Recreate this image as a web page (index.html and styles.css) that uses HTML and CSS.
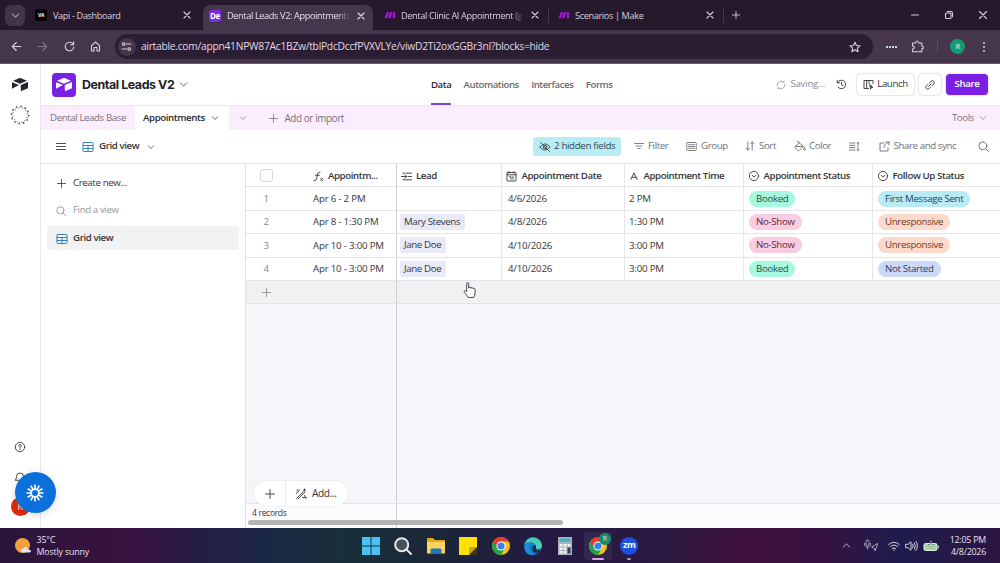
FILE: index.html
```html
<!DOCTYPE html>
<html lang="en">
<head>
    <meta charset="UTF-8">
    <meta name="viewport" content="width=device-width, initial-scale=1.0">
    <title>Dental Leads V2: Appointments</title>
    <link rel="stylesheet" href="styles.css">
</head>
<body>
    <!-- Shared icons -->
    <svg class="sprite" aria-hidden="true">
        <symbol id="chevron" viewBox="0 0 10 10"><path d="M1.500 3.300 5 6.800l3.500-3.500"/></symbol>
        <symbol id="close" viewBox="0 0 10 10"><path d="m2 2 6 6M8 2 2 8"/></symbol>
        <symbol id="plus" viewBox="0 0 10 10"><path d="M5 .5v9M.5 5h9"/></symbol>
        <symbol id="search" viewBox="0 0 10 10"><circle cx="4.400" cy="4.400" r="3.600"/><path d="m7 7 2.400 2.400"/></symbol>
        <symbol id="make" viewBox="0 0 12 10"><path d="M1.600 8.200 4.200 2.200M5.200 8.200l2-6M10 8.200v-6" fill="none" stroke="#a512dc" stroke-width="2.400"/></symbol>
        <symbol id="table" viewBox="0 0 12 12"><rect x="1" y="1.500" width="10" height="9" rx=".8"/><path d="M1 4.500h10M1 7.500h10M6 4.500v6"/></symbol>
        <symbol id="select" viewBox="0 0 12 12"><circle cx="6" cy="6" r="4.600"/><path d="m4.200 5.300 1.800 1.800 1.800-1.800"/></symbol>
        <symbol id="airtable" viewBox="0 0 18 15"><path d="M2 3.800 8.200 1.200q.8-.3 1.600 0L16 3.800 9 6.700z"/><path d="M9.800 7.900 17 5v6.200l-7.200 3z"/><path d="M1 5.200 8 8.100 2.800 10.700 1 11.800z"/></symbol>
        <symbol id="chrome" viewBox="0 0 20 20"><circle cx="10" cy="10" r="9" fill="#fbc116"/><path d="M10 10 2.200 5.500A9 9 0 0 0 10 19l4-6.800z" fill="#24a148"/><path d="M10 5.500h7.800A9 9 0 0 0 2.200 5.500L6 12z" fill="#e33b2e"/><circle cx="10" cy="10" r="4.600" fill="#fff"/><circle cx="10" cy="10" r="3.600" fill="#3b7de9"/></symbol>
    </svg>

    <!-- Browser tabs -->
    <div class="tab-strip">
        <div class="tab-search"><svg class="icon s9"><use href="#chevron"/></svg></div>
        <div class="tab tab-first">
            <span class="fav fav-vapi">VA</span>
            <span class="tab-title">Vapi - Dashboard</span>
            <svg class="icon s10"><use href="#close"/></svg>
        </div>
        <div class="tab tab-active">
            <span class="fav fav-base">De</span>
            <span class="tab-title tab-fade">Dental Leads V2: Appointments</span>
            <svg class="icon s10"><use href="#close"/></svg>
        </div>
        <div class="tab tab-line">
            <svg class="fav-make"><use href="#make"/></svg>
            <span class="tab-title tab-fade">Dental Clinic AI Appointment (g</span>
            <svg class="icon s10"><use href="#close"/></svg>
        </div>
        <div class="tab tab-line">
            <svg class="fav-make"><use href="#make"/></svg>
            <span class="tab-title">Scenarios | Make</span>
            <svg class="icon s10"><use href="#close"/></svg>
        </div>
        <svg class="icon s8 new-tab"><use href="#plus"/></svg>
        <div class="window-buttons">
            <svg class="icon s10" viewBox="0 0 10 10"><path d="M1.500 5h7"/></svg>
            <svg class="icon s10" viewBox="0 0 10 10"><rect x="1.500" y="3" width="5.500" height="5.500" rx="1"/><path d="M3.300 1.500h3.500q1.700 0 1.700 1.700v3.500"/></svg>
            <svg class="icon s10" viewBox="0 0 10 10"><path d="m1.500 1.500 7 7M8.500 1.500l-7 7"/></svg>
        </div>
    </div>

    <!-- Address bar -->
    <div class="address-bar">
        <div class="nav-buttons">
            <svg class="icon s11" viewBox="0 0 11 11"><path d="M10 5.500H1.500M5.300 1.500l-4 4 4 4"/></svg>
            <svg class="icon s11 dim" viewBox="0 0 11 11"><path d="M1 5.500h8.500M5.700 1.500l4 4-4 4"/></svg>
            <svg class="icon s11" viewBox="0 0 11 11"><path d="M9.300 3.500A4.300 4.300 0 1 0 9.800 6M9.600.8v3H6.600"/></svg>
            <svg class="icon s11" viewBox="0 0 11 11"><path d="M1.500 4.600 5.500 1l4 3.600V10H7V6.500H4V10H1.500z"/></svg>
        </div>
        <div class="url-field">
            <span class="site-info"><svg class="icon s11" viewBox="0 0 11 11"><circle cx="2.800" cy="3" r="1.300"/><path d="M5.500 3H10M1 8h4.500"/><circle cx="8.200" cy="8" r="1.300"/></svg></span>
            <span class="url">airtable.com/appn41NPW87Ac1BZw/tblPdcDccfPVXVLYe/viwD2Ti2oxGGBr3nI?blocks=hide</span>
            <svg class="icon s12" viewBox="0 0 12 12"><path d="m6 1.200 1.400 3.300 3.600.3-2.700 2.400.8 3.500L6 8.800l-3.100 1.900.8-3.500L1 4.800l3.600-.3z"/></svg>
        </div>
        <div class="browser-tools">
            <span class="ext-dots"><i></i><i></i><i></i><i></i></span>
            <svg class="icon s13" viewBox="0 0 13 13"><path d="M1.500 3h3.300q0-2 1.400-2t1.400 2h3.200v3q1.700.2 1.700 1.500t-1.700 1.400v2.900H1.500V9q1.800-.2 1.800-1.600T1.500 5.900z"/></svg>
            <span class="bar-line"></span>
            <span class="profile">R</span>
            <svg class="kebab" viewBox="0 0 4 12"><circle cx="2" cy="2" r="1"/><circle cx="2" cy="6" r="1"/><circle cx="2" cy="10" r="1"/></svg>
        </div>
    </div>

    <!-- Airtable -->
    <div class="app">
        <div class="rail">
            <svg class="rail-logo"><use href="#airtable"/></svg>
            <svg class="rail-loader" viewBox="0 0 20 20"><circle cx="10" cy="10" r="8.600"/><circle class="inner" cx="10" cy="10" r="7.300"/></svg>
            <svg class="icon s12 rail-help" viewBox="0 0 12 12"><circle cx="6" cy="6" r="4.700"/><path d="M4.600 5q.1-1.500 1.400-1.500T7.400 4.800Q7.400 5.600 6 6.300v.7M6 8v.8"/></svg>
            <svg class="icon s12 rail-bell" viewBox="0 0 12 12"><path d="M1.500 9q1-1 1-3.500a3.500 3.500 0 0 1 7 0Q9.500 8 10.500 9z"/></svg>
            <span class="rail-user">R</span>
        </div>
        <div class="workspace">
            <div class="base-header">
                <div class="base-name">
                    <span class="base-icon"><svg><use href="#airtable"/></svg></span>
                    <h1>Dental Leads V2</h1>
                    <svg class="icon s9"><use href="#chevron"/></svg>
                </div>
                <nav class="base-nav">
                    <a class="active">Data</a>
                    <a>Automations</a>
                    <a>Interfaces</a>
                    <a>Forms</a>
                </nav>
                <div class="base-actions">
                    <svg class="icon s10 saving-icon" viewBox="0 0 10 10"><path d="M1.200 5.500A3.800 3.800 0 0 1 8 2.700V1M8.800 4.500A3.800 3.800 0 0 1 2 7.300V9"/></svg>
                    <span class="saving">Saving...</span>
                    <svg class="icon s11 history" viewBox="0 0 11 11"><path d="M1.400 3.700A4.300 4.300 0 1 1 2 8.200M1.200 1.300v2.500h2.500M5.500 3.200v2.600l1.800 1"/></svg>
                    <span class="btn launch"><svg class="icon s11" viewBox="0 0 11 11"><path d="M5.500 9.500H1v-8h9v3M3.700 1.500v8M6 1.500v3"/><path d="m7 5.800 2.800 2.500-1.400.2-.6 1.300z" fill="currentColor"/></svg>Launch</span>
                    <span class="btn link"><svg class="icon s10" viewBox="0 0 10 10"><path d="M3.700 6.300 6.300 3.700M4.400 2.900l1.500-1.500a1.900 1.900 0 0 1 2.700 2.700L7.100 5.600M5.600 7.100 4.100 8.600a1.900 1.900 0 0 1-2.700-2.700l1.500-1.500"/></svg></span>
                    <span class="btn share">Share</span>
                </div>
            </div>

            <div class="table-tabs">
                <span class="table-tab first">Dental Leads Base</span>
                <span class="table-tab current">Appointments <svg class="icon s8"><use href="#chevron"/></svg></span>
                <span class="table-more"><svg class="icon s8"><use href="#chevron"/></svg></span>
                <span class="table-add"><svg class="icon s9"><use href="#plus"/></svg>Add or import</span>
                <span class="table-tools">Tools <svg class="icon s8"><use href="#chevron"/></svg></span>
            </div>

            <div class="view-bar">
                <svg class="icon s10 burger" viewBox="0 0 10 10"><path d="M.5 1.500h9M.5 4.500h9M.5 7.500h9"/></svg>
                <svg class="icon s12 blue"><use href="#table"/></svg>
                <span class="view-name">Grid view</span>
                <svg class="icon s8"><use href="#chevron"/></svg>
                <div class="view-tools">
                    <span class="hidden-fields"><svg class="icon s12" viewBox="0 0 12 12"><path d="M1 6q5-6.500 10 0-5 6.500-10 0zM1.500 1.500l9 9"/><circle cx="6" cy="6" r="1.700"/></svg>2 hidden fields</span>
                    <span class="tool filter"><svg class="icon s10" viewBox="0 0 10 10"><path d="M.5 2.500h9M2.200 5h5.600M4 7.500h2"/></svg>Filter</span>
                    <span class="tool group"><svg class="icon s11" viewBox="0 0 11 11"><rect x=".8" y="1.500" width="9.400" height="8" rx=".6"/><path d="M2.500 3.700h1M4.500 3.700h4M2.500 5.500h1M4.500 5.500h4M2.500 7.300h1M4.500 7.300h4"/></svg>Group</span>
                    <span class="tool sort"><svg class="icon s10" viewBox="0 0 10 10"><path d="M2.800 1v8M1 7.200 2.800 9l1.800-1.800M7.200 9V1M5.400 2.800 7.200 1 9 2.800"/></svg>Sort</span>
                    <span class="tool color"><svg class="icon s12" viewBox="0 0 12 12"><path d="m3 1 6.300 5.300-4.200 4.200q-.6.500-1.200 0L1.200 7.800q-.5-.6 0-1.200l4-3.700M1.500 6.500h7.700"/><path d="M10.500 7.500q-1.700 3 0 3t0-3"/></svg>Color</span>
                    <span class="tool height"><svg class="icon s11" viewBox="0 0 11 11"><path d="M.5 2H6M.5 4.300H6M.5 6.600H6M.5 9H6M9 1.500v8M8 2.300l1-.8 1 .8M8 8.700l1 .8 1-.8"/></svg></span>
                    <span class="tool sync"><svg class="icon s11" viewBox="0 0 11 11"><path d="M5 2H1v8h8V6.500M7 1h3v3M10 1Q5 2.500 5 6.500"/></svg>Share and sync</span>
                    <svg class="icon s11 find"><use href="#search"/></svg>
                </div>
            </div>

            <div class="content">
                <aside class="views">
                    <div class="view-row create"><svg class="icon s9"><use href="#plus"/></svg>Create new...</div>
                    <div class="view-row find-view"><svg class="icon s10"><use href="#search"/></svg>Find a view</div>
                    <div class="view-row selected"><svg class="icon s12 blue"><use href="#table"/></svg>Grid view</div>
                </aside>

                <main class="grid">
                    <div class="row head">
                        <div class="cell num"><span class="check"></span></div>
                        <div class="cell name"><svg class="icon s11" viewBox="0 0 11 11"><path d="M7 1.200Q5 .5 4.600 3L3.600 8Q3.200 10 1 9.500M2.400 4.200h4M7.800 7.500l1.700 2M9.500 7.500l-1.700 2"/></svg>Appointm...</div>
                        <div class="cell lead"><svg class="icon s11" viewBox="0 0 11 11"><path d="M5 2.200h5.500M.5 5.500h5M4 4l1.700 1.500L4 7M7 5.500h3.500M2 2.200h1.500M2 8.800h8.500"/></svg>Lead</div>
                        <div class="cell date"><svg class="icon s11" viewBox="0 0 11 11"><rect x="1" y="1.500" width="9" height="8.500" rx=".5"/><path d="M1 3.800h9M3 .5v1.500M8 .5v1.500M3.500 5.700H5v2.500M7 5.500v2.700"/></svg>Appointment Date</div>
                        <div class="cell time"><svg class="icon s10" viewBox="0 0 10 10"><path d="M1.800 8.500 5 1.800l3.200 6.700M3 6.300h4"/></svg>Appointment Time</div>
                        <div class="cell status"><svg class="icon s12"><use href="#select"/></svg>Appointment Status</div>
                        <div class="cell follow"><svg class="icon s12"><use href="#select"/></svg>Follow Up Status</div>
                    </div>
                    <div class="row">
                        <div class="cell num">1</div>
                        <div class="cell name">Apr 6 - 2 PM</div>
                        <div class="cell lead"></div>
                        <div class="cell date">4/6/2026</div>
                        <div class="cell time">2 PM</div>
                        <div class="cell status"><span class="pill booked">Booked</span></div>
                        <div class="cell follow"><span class="pill sent">First Message Sent</span></div>
                    </div>
                    <div class="row">
                        <div class="cell num">2</div>
                        <div class="cell name">Apr 8 - 1:30 PM</div>
                        <div class="cell lead"><span class="linked">Mary Stevens</span></div>
                        <div class="cell date">4/8/2026</div>
                        <div class="cell time">1:30 PM</div>
                        <div class="cell status"><span class="pill no-show">No-Show</span></div>
                        <div class="cell follow"><span class="pill unresponsive">Unresponsive</span></div>
                    </div>
                    <div class="row">
                        <div class="cell num">3</div>
                        <div class="cell name">Apr 10 - 3:00 PM</div>
                        <div class="cell lead"><span class="linked">Jane Doe</span></div>
                        <div class="cell date">4/10/2026</div>
                        <div class="cell time">3:00 PM</div>
                        <div class="cell status"><span class="pill no-show">No-Show</span></div>
                        <div class="cell follow"><span class="pill unresponsive">Unresponsive</span></div>
                    </div>
                    <div class="row">
                        <div class="cell num">4</div>
                        <div class="cell name">Apr 10 - 3:00 PM</div>
                        <div class="cell lead"><span class="linked">Jane Doe</span></div>
                        <div class="cell date">4/10/2026</div>
                        <div class="cell time">3:00 PM</div>
                        <div class="cell status"><span class="pill booked">Booked</span></div>
                        <div class="cell follow"><span class="pill not-started">Not Started</span></div>
                    </div>
                    <div class="row add-row">
                        <div class="cell num"><svg class="icon s9"><use href="#plus"/></svg></div>
                        <div class="cell name"></div>
                    </div>
                    <div class="grid-space"><div class="frozen"></div></div>
                    <div class="grid-footer">
                        <div class="frozen">4 records</div>
                        <div class="scrollbar"></div>
                    </div>
                    <div class="add-pill">
                        <span class="add-plus"><svg class="icon s10"><use href="#plus"/></svg></span>
                        <span class="add-more"><svg class="icon s12" viewBox="0 0 12 12"><path d="m1.500 10.500 7-7M3 11l7-7M1.500 5.500 4.500 2M1.500 3 3 1.500M9.500 1v2M8.500 2h2M9.500 7.500l1.500 3M7.500 9.500H11"/></svg>Add...</span>
                    </div>
                </main>
            </div>
        </div>

        <!-- Floating assistant button and pointer -->
        <div class="assistant">
            <svg viewBox="0 0 20 20"><circle cx="10" cy="10" r="3.800"/><path d="M10 1.500V6M10 14v4.500M1.500 10H6M14 10h4.500M5.750 2.600 8 6.500M12 13.500l2.250 3.900M14.250 2.600 12 6.500M8 13.500l-2.250 3.900M2.600 5.750 6.500 8M13.500 12l3.900 2.250M17.400 5.750 13.500 8M6.500 12l-3.900 2.250"/></svg>
        </div>
        <svg class="pointer" viewBox="0 0 14 18"><path d="M4 11V2.200q0-1.200 1-1.200t1.200 1.200V7q.2-1.200 1.200-1t1.100 1.200q.3-1 1.200-.8t1.100 1.200q.3-.8 1.100-.5T13 8.500V12q0 2.500-1.500 5H5.500Q4.700 15 1.500 11.500.8 10.300 1.800 9.700 2.800 9.300 4 11z"/></svg>
    </div>

    <!-- Windows taskbar -->
    <div class="taskbar">
        <div class="weather">
            <svg viewBox="0 0 18 18"><circle cx="8.500" cy="8.500" r="7.500" fill="#f2a33c"/><path d="M9 15.500q-2.300-.2-2-2.200T9.500 11.600Q10.800 9 13 10.500q1.300 1 1 2 2.700-.3 3 1.500-.1 1.500-2 1.500z" fill="#dce8fa"/></svg>
            <div><p>35°C</p><p>Mostly sunny</p></div>
        </div>
        <div class="task-icons">
            <svg viewBox="0 0 20 20"><path d="M1 1h8.500v8.500H1zM10.500 1H19v8.500h-8.500zM1 10.500h8.500V19H1zM10.500 10.500H19V19h-8.500z" fill="#4cc2f4"/></svg>
            <svg viewBox="0 0 20 20" fill="#46505a" stroke="#e8e8ea" stroke-width="2"><circle cx="8.700" cy="8.700" r="6.500"/><path d="m13.500 13.500 4.500 4.500" stroke-linecap="round"/></svg>
            <svg viewBox="0 0 20 20"><path d="M1 3q0-1 1-1h5l2 2h9q1 0 1 1v4H1z" fill="#e9a720"/><path d="M1 6h18v11.500H1z" fill="#fcd462"/><path d="M4.500 18v-4q0-1.500 1.500-1.500h8q1.500 0 1.500 1.500v4z" fill="#1d78b8"/></svg>
            <svg viewBox="0 0 20 20"><path d="M1 1h18v10h-8v8H1z" fill="#ffe000"/><path d="M11 11h8v8h-8z" fill="#3b3520"/><path d="M11 19v-8h8z" fill="#c7a419"/></svg>
            <svg><use href="#chrome"/></svg>
            <svg viewBox="0 0 20 20"><circle cx="10" cy="10" r="9" fill="#1678cb"/><path d="M1.500 8A9 9 0 0 1 19 9q.3 4-4 4-3 0-2-2.500Q12 6 7.500 6.300 3.500 6.400 1.500 8z" fill="#48cfae"/><path d="M13 10.500Q12.500 7 9 7.500 5.500 8.500 6 12.500q.8 5 6 6.200-8 1.500-10.300-5Q1 8.500 6 7" fill="#1593dd"/><path d="M13 11q-1 3 2.500 3.300 2 0 3.300-1.300-2 4.500-5.500 4Q9 16.500 9.300 12q.3-3 2.700-3 1.500.5 1 2z" fill="#17304f"/></svg>
            <svg viewBox="0 0 20 20"><rect x="3" y="1" width="14" height="18" fill="#a9b3bd"/><path d="M4.500 2.500h11v3.300h-11z" fill="#3bb4c9"/><path d="M4.500 8h3v2.500h-3zM8.500 8h3v2.500h-3zM12.500 8h3v2.500h-3zM4.500 11.500h3V14h-3zM8.500 11.500h3V14h-3zM4.500 15h3v2.500h-3zM8.500 15h3v2.500h-3z" fill="#f4f4f6"/><path d="M12.500 11.500h3v6h-3z" fill="#344055"/></svg>
            <span class="task-open"><svg><use href="#chrome"/></svg><b>R</b></span>
            <span class="task-zoom">zm</span>
        </div>
        <div class="tray">
            <svg class="icon s9 up"><use href="#chevron"/></svg>
            <svg class="icon mic" viewBox="0 0 16 13"><rect x="3" y="1" width="3" height="5.500" rx="1.500"/><path d="M1.500 4.500q0 3.700 3 3.700t3-3.700M4.500 8.200V10M14.500 4.500 8.500 8l2.500 1 1 2.500z"/></svg>
            <svg class="icon wifi" viewBox="0 0 12 12"><path d="M.7 4.500q5.300-4.700 10.600 0M2.500 6.500q3.500-3 7 0M4.300 8.500q1.700-1.400 3.400 0M6 9.800v.7"/></svg>
            <svg class="icon sound" viewBox="0 0 13 12"><path d="M1 4.300h2L6 1.800v8.400L3 7.700H1zM7.700 4.200q1.200 1.800 0 3.600M9.400 2.800q2 3.200 0 6.400M11 1.500q3 4.500 0 9"/></svg>
            <svg class="battery" viewBox="0 0 16 12"><rect x="1" y="3.500" width="13" height="7" rx="1.500" fill="#a8d5a3" stroke="#e3efe3"/><path d="M15.300 5.800v2.500" stroke="#e3efe3"/><path d="M5 4.500 8 7l3-2.500H8.500V.5h-1v4z" fill="#fff" stroke="#254a48" stroke-width=".5"/></svg>
            <div class="clock"><p>12:05 PM</p><p>4/8/2026</p></div>
        </div>
    </div>
</body>
</html>
```

FILE: styles.css
```css
/* Global */
* {
    margin: 0;
    padding: 0;
    box-sizing: border-box;
}

body {
    width: 1000px;
    height: 563px;
    overflow: hidden;
    display: flex;
    flex-direction: column;
    font-family: "Open Sans", "Noto Sans", sans-serif;
    font-size: 9.7px;
    letter-spacing: -0.4px;
    line-height: 1.3;
    color: #35363b;
    background-color: #ffffff;
    white-space: nowrap;
}

svg {
    flex-shrink: 0;
}

.sprite {
    position: absolute;
    width: 0;
    height: 0;
}

.icon {
    fill: none;
    stroke: currentColor;
    stroke-width: 0.9;
    stroke-linecap: round;
    stroke-linejoin: round;
}

.s8 { width: 8px; height: 8px; }
.s9 { width: 9px; height: 9px; }
.s10 { width: 10px; height: 10px; }
.s11 { width: 11px; height: 11px; }
.s12 { width: 12px; height: 12px; }
.s13 { width: 13px; height: 13px; }

.blue {
    color: #2478b4;
}

/* Browser tabs */
.tab-strip {
    display: flex;
    align-items: center;
    height: 30px;
    flex-shrink: 0;
    padding-left: 5px;
    background-color: #27192c;
    color: #d9cfdb;
}

.tab-strip .icon,
.address-bar .icon {
    stroke-width: 1.1;
}

.tab-search {
    display: flex;
    align-items: center;
    justify-content: center;
    width: 20px;
    height: 21px;
    border-radius: 6px;
    background-color: #44344a;
}

.tab {
    display: flex;
    align-items: center;
    width: 175px;
    height: 16px;
    padding: 0 8px 0 9px;
}

.tab-first {
    width: 178px;
    padding: 0 11px 0 10px;
}

.tab-active {
    width: 170px;
    height: 25px;
    align-self: flex-end;
    padding: 0 7px 4px 6px;
    border-radius: 8px 8px 0 0;
    background-color: #45364b;
    color: #e6dde8;
}

.tab-line {
    border-right: 1px solid #46364b;
}

.tab-active + .tab-line {
    width: 176px;
    padding-left: 11px;
}

.tab-title {
    flex: 1;
    min-width: 0;
    margin-right: 6px;
    overflow: hidden;
    font-size: 9.2px;
    letter-spacing: -0.38px;
    line-height: 15px;
}

.tab-fade {
    -webkit-mask-image: linear-gradient(to right, #000 90%, transparent);
    mask-image: linear-gradient(to right, #000 90%, transparent);
}

.fav {
    width: 12px;
    height: 12px;
    margin-right: 6px;
    border-radius: 3px;
    color: #ffffff;
    text-align: center;
    font-weight: bold;
}

.fav-vapi {
    background-color: #000000;
    font-size: 5px;
    line-height: 12px;
}

.fav-base {
    background-color: #7c2ae0;
    font-size: 8px;
    line-height: 12px;
    border-radius: 2px;
}

.fav-make {
    width: 12px;
    height: 10px;
    margin-right: 5px;
}

.new-tab {
    margin-left: 8px;
}

.window-buttons {
    display: flex;
    gap: 24px;
    margin-left: auto;
    padding-right: 12px;
}

/* Address bar */
.address-bar {
    display: flex;
    align-items: center;
    height: 34px;
    flex-shrink: 0;
    padding: 0 14px 0 11px;
    background-color: #45364b;
    border-bottom: 1px solid #67596b;
    color: #d9cfdb;
}

.nav-buttons {
    display: flex;
    gap: 15.3px;
    margin-right: 14px;
}

.dim {
    opacity: 0.4;
}

.url-field {
    display: flex;
    align-items: center;
    width: 758px;
    height: 25px;
    padding: 0 12px 0 3px;
    border-radius: 13px;
    background-color: #2b1e33;
}

.site-info {
    display: flex;
    align-items: center;
    justify-content: center;
    width: 18px;
    height: 18px;
    margin-right: 5px;
    border-radius: 50%;
    background-color: #44354b;
}

.url {
    flex: 1;
    font-size: 10.3px;
    letter-spacing: -0.28px;
    color: #e0d8e3;
}

.browser-tools {
    display: flex;
    align-items: center;
    margin-left: auto;
}

.ext-dots {
    display: flex;
    gap: 1px;
    margin-right: 14px;
}

.ext-dots i {
    width: 2px;
    height: 2px;
    background-color: #c9d8d9;
}

.bar-line {
    width: 1px;
    height: 12px;
    margin: 0 12px 0 13px;
    background-color: #5d4d63;
}

.profile {
    width: 15px;
    height: 15px;
    margin-right: 17px;
    border-radius: 50%;
    background-color: #149b74;
    color: #e8fff8;
    font-size: 7.5px;
    line-height: 15px;
    text-align: center;
}

.kebab {
    width: 4px;
    height: 12px;
    fill: #d9cfdb;
}

/* Application */
.app {
    position: relative;
    display: flex;
    flex: 1;
    min-height: 0;
}

.rail {
    display: flex;
    flex-direction: column;
    align-items: center;
    width: 41px;
    padding-top: 13px;
    border-right: 1px solid #e9e9ee;
}

.rail-logo {
    width: 18px;
    height: 15px;
    fill: #24252a;
}

.rail-loader {
    width: 20px;
    height: 20px;
    margin-top: 13px;
    fill: none;
    stroke: #3c3d42;
    stroke-width: 1.5;
    stroke-dasharray: 1.5 3;
}

.rail-loader .inner {
    stroke: #77787d;
    stroke-width: 1.1;
    stroke-dasharray: 1.2 2.62;
    stroke-dashoffset: 2;
}

.rail-help {
    margin-top: auto;
}

.rail-bell {
    margin-top: 18px;
}

.rail-user {
    width: 19px;
    height: 19px;
    margin: 14px 0 12px;
    border-radius: 50%;
    background-color: #dc2c0c;
    color: #ffffff;
    font-size: 9px;
    line-height: 19px;
    text-align: center;
}

.workspace {
    display: flex;
    flex-direction: column;
    flex: 1;
    min-width: 0;
}

.base-header {
    display: flex;
    height: 41px;
    flex-shrink: 0;
    padding: 0 12px 0 11px;
}

.base-name {
    display: flex;
    align-items: center;
    width: 379px;
}

.base-icon {
    display: flex;
    align-items: center;
    justify-content: center;
    width: 24px;
    height: 24px;
    margin-right: 6px;
    border-radius: 4px;
    background-color: #7a22e3;
}

.base-icon svg {
    width: 18px;
    height: 15px;
    fill: #ffffff;
}

.base-name h1 {
    margin-right: 5px;
    padding-top: 1px;
    font-family: Inter, sans-serif;
    font-size: 12.4px;
    font-weight: 650;
    letter-spacing: -0.42px;
    color: #222328;
}

.base-nav {
    display: flex;
    gap: 12.3px;
}

.base-nav a {
    line-height: 42px;
    height: 41px;
    font-size: 9.6px;
    font-weight: 600;
    letter-spacing: -0.42px;
    color: #696a70;
}

.base-nav .active {
    color: #28292e;
    border-bottom: 2px solid #7d45cc;
}

.base-actions {
    display: flex;
    align-items: center;
    margin-left: auto;
}

.saving-icon {
    margin-right: 4px;
    color: #a0a1a6;
}

.saving {
    margin-right: 11px;
    letter-spacing: -0.25px;
    color: #8b8c91;
}

.history {
    margin-right: 10px;
}

.btn {
    display: flex;
    align-items: center;
    justify-content: center;
    height: 21px;
    border-radius: 4px;
    font-weight: 500;
    box-shadow: 0 0 2px rgba(0, 0, 0, 0.35);
}

.launch {
    gap: 3px;
    width: 57px;
    margin-right: 5px;
}

.link {
    width: 22px;
    margin-right: 5px;
}

.share {
    width: 42px;
    background-color: #7b1fe4;
    color: #ffffff;
    font-weight: 600;
}

/* Table tabs */
.table-tabs {
    display: flex;
    align-items: center;
    height: 25px;
    flex-shrink: 0;
    background-color: #fbeefc;
    border-top: 1px solid #f0e3f2;
    color: #7a7080;
}

.table-tab {
    display: flex;
    align-items: center;
    height: 24px;
}

.first {
    width: 94px;
    padding-left: 9px;
    letter-spacing: -0.4px;
}

.current {
    width: 94px;
    gap: 6px;
    padding-left: 8px;
    background-color: #ffffff;
    border-radius: 2px 2px 0 0;
    font-weight: 600;
    color: #27282d;
}

.table-more {
    display: flex;
    justify-content: center;
    width: 28px;
}

.table-add {
    display: flex;
    align-items: center;
    gap: 7px;
    margin-left: 11.5px;
    font-size: 9.9px;
}

.table-tools {
    display: flex;
    align-items: center;
    gap: 5px;
    margin-left: auto;
    padding-right: 13px;
}

/* View bar */
.view-bar {
    display: flex;
    align-items: center;
    height: 33px;
    flex-shrink: 0;
    padding: 0 11px 0 15px;
}

.burger {
    margin-right: 16px;
}

.view-name {
    margin: 0 8px 0 5px;
    font-weight: 600;
}

.view-tools {
    display: flex;
    align-items: center;
    margin-left: auto;
    color: #707177;
}

.hidden-fields,
.tool {
    display: flex;
    align-items: center;
    gap: 4px;
}

.hidden-fields {
    gap: 3px;
    width: 88px;
    height: 19px;
    margin-right: 13px;
    padding-left: 6px;
    border-radius: 3px;
    background-color: #b9edf5;
    color: #33474f;
    letter-spacing: -0.33px;
}

.filter { width: 52px; }
.group { width: 59px; }
.sort { width: 49px; }
.color { width: 55px; gap: 3px; }
.height { width: 30px; }
.sync { width: 99px; gap: 3.5px; }

/* Content */
.content {
    display: flex;
    flex: 1;
    min-height: 0;
    border-top: 1px solid #e6e7eb;
}

.views {
    width: 205px;
    padding: 6px 6px 0;
    border-right: 1px solid #e1e2e6;
}

.view-row {
    display: flex;
    align-items: center;
    height: 27px;
    padding-left: 10px;
}

.create {
    gap: 7px;
    letter-spacing: -0.38px;
}

.find-view {
    gap: 7px;
    padding-left: 9px;
    color: #97989d;
}

.selected {
    gap: 5px;
    height: 24px;
    margin-top: 2px;
    padding: 1px 0 0 9px;
    border-radius: 3px;
    background-color: #f2f2f2;
    font-weight: 600;
}

/* Grid */
.grid {
    position: relative;
    display: flex;
    flex-direction: column;
    flex: 1;
    min-width: 0;
    background-color: #f6f6fa;
}

.row {
    display: flex;
    height: 23.4px;
    flex-shrink: 0;
    background-color: #ffffff;
    border-bottom: 1px solid #e4e5e9;
}

.cell {
    display: flex;
    align-items: center;
    flex-shrink: 0;
    border-right: 1px solid #e6e6ea;
    padding: 1px 0 0 6px;
}

.head {
    font-weight: 600;
}

.head .cell {
    gap: 4px;
    padding: 2px 0 0 4px;
}

.num {
    width: 40px;
    justify-content: center;
    border-right: none;
    padding-left: 0;
    color: #85868b;
}

.head .num {
    padding: 0;
}

.name,
.head .name {
    width: 111px;
    padding-left: 27px;
    border-right-color: #ccccd2;
}

.row .name,
.row .date,
.row .time {
    letter-spacing: -0.2px;
}

.head .name,
.head .date,
.head .time {
    letter-spacing: -0.42px;
}

.lead { width: 105px; padding-left: 3px; }
.date { width: 123px; }
.time { width: 119px; padding-left: 4px; }
.status { width: 129px; padding-left: 5px; }
.follow { width: 128px; padding-left: 5px; border-right: none; }

.head .date { gap: 4.5px; }
.head .time { gap: 4.5px; }
.head .status,
.head .follow { gap: 3.5px; }

.check {
    width: 13px;
    height: 13px;
    border: 1px solid #d5d6da;
    border-radius: 3px;
}

.linked {
    padding: 0 5px 0 4px;
    margin-top: -1px;
    border-radius: 2px;
    background-color: #e9eaf7;
    letter-spacing: -0.36px;
    line-height: 16px;
}

.pill {
    margin-top: -1px;
    padding: 0 7px;
    border-radius: 8px;
    letter-spacing: -0.32px;
    line-height: 16px;
}

.booked { background-color: #a6f9de; color: #1e5646; }
.no-show { background-color: #f9cce1; color: #5d2840; }
.sent { background-color: #b9ebf7; color: #20485c; }
.unresponsive { background-color: #fcd9ca; color: #673b2b; }
.not-started { background-color: #cdd9f8; color: #27406f; }

.add-row {
    background-color: #f1f1f4;
}

.add-row .num {
    padding: 0;
}

.grid-space {
    flex: 1;
}

.frozen {
    width: 151px;
    height: 100%;
    border-right: 1px solid #ccccd2;
}

.grid-footer {
    position: relative;
    height: 25px;
    flex-shrink: 0;
    background-color: #fcfcfe;
    border-top: 1px solid #e2e3e7;
}

.grid-footer .frozen {
    padding: 3px 0 0 6px;
    font-size: 8.5px;
    letter-spacing: -0.3px;
}

.scrollbar {
    position: absolute;
    left: 2px;
    bottom: 3px;
    width: 315px;
    height: 5px;
    border-radius: 3px;
    background-color: #b4b4b6;
}

.add-pill {
    position: absolute;
    left: 8px;
    bottom: 22px;
    display: flex;
    width: 94px;
    height: 25px;
    border-radius: 13px;
    background-color: #ffffff;
    box-shadow: 0 0 2px rgba(0, 0, 0, 0.12);
    font-size: 10.2px;
}

.add-plus {
    display: flex;
    align-items: center;
    justify-content: center;
    width: 32px;
    border-right: 1px solid #ececf0;
}

.add-more {
    display: flex;
    align-items: center;
    gap: 5px;
    padding-left: 9px;
}

.assistant {
    position: absolute;
    left: 14.5px;
    top: 408px;
    width: 41px;
    height: 41px;
    padding: 10.5px;
    border-radius: 50%;
    background-color: #0c70dc;
    box-shadow: 0 2px 8px rgba(0, 0, 0, 0.15);
}

.assistant svg {
    display: block;
    width: 20px;
    height: 20px;
    fill: none;
    stroke: #ffffff;
    stroke-width: 1.6;
}

.pointer {
    position: absolute;
    left: 463px;
    top: 217px;
    width: 13px;
    height: 18px;
    fill: #ffffff;
    stroke: #37383d;
    stroke-width: 1;
}

/* Taskbar */
.taskbar {
    position: relative;
    display: flex;
    align-items: center;
    justify-content: space-between;
    height: 35px;
    flex-shrink: 0;
    padding: 0 14px 0 14px;
    background: linear-gradient(to right, #28163b 0, #3b1240 125px, #251d45 200px, #1b2745 260px, #18303b 350px, #1c2439 450px, #251943 550px, #2a1a40 660px, #40103f 750px, #371240 820px, #1e1d4e 900px, #2c1441 1000px);
    color: #e8e2ee;
}

.weather {
    display: flex;
    align-items: center;
    gap: 4.5px;
    width: 300px;
    font-size: 8.8px;
    letter-spacing: -0.15px;
    line-height: 12px;
}

.weather svg {
    width: 18px;
    height: 18px;
}

.task-icons {
    position: absolute;
    left: 361px;
    display: flex;
    align-items: center;
    gap: 12.4px;
}

.task-icons svg {
    display: block;
    width: 20px;
    height: 20px;
}

.task-open {
    position: relative;
}

.task-open::before {
    content: "";
    position: absolute;
    inset: -4px;
    border-radius: 3px;
    background-color: rgba(255, 255, 255, 0.06);
}

.task-open svg {
    position: relative;
}

.task-open::after,
.task-zoom::after {
    content: "";
    position: absolute;
    left: 4px;
    bottom: -4px;
    width: 12px;
    height: 2px;
    border-radius: 1px;
    background-color: #d9a3dc;
}

.task-open b {
    position: absolute;
    right: -3px;
    top: -3px;
    width: 12px;
    height: 12px;
    border-radius: 50%;
    background-color: #148b6b;
    font-size: 7px;
    font-weight: 400;
    line-height: 12px;
    text-align: center;
}

.task-zoom {
    position: relative;
    width: 18px;
    height: 18px;
    border-radius: 50%;
    background-color: #1d50df;
    color: #ffffff;
    font-size: 9px;
    font-weight: bold;
    line-height: 16px;
    text-align: center;
}

.task-zoom::after {
    left: 7px;
    bottom: -5px;
    width: 4px;
    background-color: #a49fab;
}

.tray {
    display: flex;
    align-items: center;
}

.up {
    margin-right: 12px;
    transform: rotate(180deg);
}

.mic { width: 16px; height: 13px; margin-right: 9px; opacity: 0.75; }
.wifi { width: 12px; height: 12px; margin-right: 5px; }
.sound { width: 13px; height: 12px; margin-right: 5px; }
.battery { width: 16px; height: 12px; margin-right: 11px; fill: none; }

.clock {
    font-size: 8.8px;
    letter-spacing: -0.2px;
    line-height: 12px;
    text-align: right;
}
```
